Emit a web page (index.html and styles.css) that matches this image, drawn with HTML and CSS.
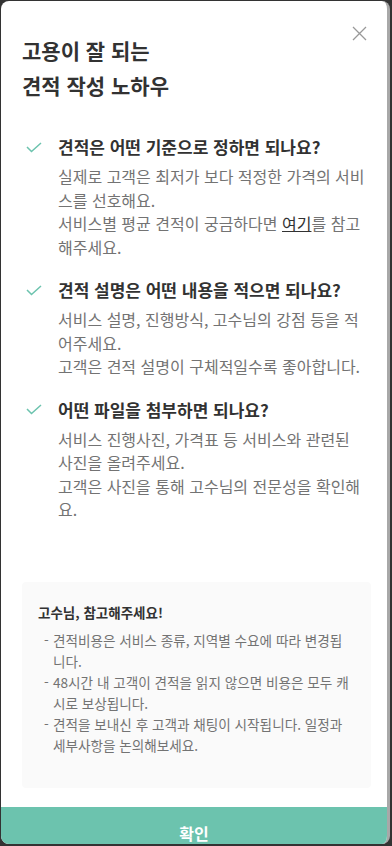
FILE: index.html
```html
<!DOCTYPE html>
<html lang="ko">
<head>
  <meta charset="UTF-8">
  <meta name="viewport" content="width=device-width, initial-scale=1.0">
  <title>견적 작성 노하우</title>
  <link rel="stylesheet" href="styles.css">
</head>
<body>
  <div class="modal">
    <div class="modal-body">
      <button class="close" aria-label="닫기">
        <svg width="15" height="15" viewBox="0 0 15 15"><path d="M1 1L14 14M14 1L1 14" stroke="#999" stroke-width="1.3" fill="none"/></svg>
      </button>
      <h1 class="title">고용이 잘 되는<br>견적 작성 노하우</h1>

      <ul class="tips">
        <li class="tip">
          <div class="question">
            <svg class="check" width="16" height="11" viewBox="0 0 16 11"><path d="M1 5L5.5 9.5L15 1" stroke="#6cc3ae" stroke-width="1.5" fill="none"/></svg>
            견적은 어떤 기준으로 정하면 되나요?
          </div>
          <p class="answer">실제로 고객은 최저가 보다 적정한 가격의 서비스를 선호해요.<br>서비스별 평균 견적이 궁금하다면 <a href="#">여기</a>를 참고해주세요.</p>
        </li>
        <li class="tip">
          <div class="question">
            <svg class="check" width="16" height="11" viewBox="0 0 16 11"><path d="M1 5L5.5 9.5L15 1" stroke="#6cc3ae" stroke-width="1.5" fill="none"/></svg>
            견적 설명은 어떤 내용을 적으면 되나요?
          </div>
          <p class="answer">서비스 설명, 진행방식, 고수님의 강점 등을 적어주세요.<br>고객은 견적 설명이 구체적일수록 좋아합니다.</p>
        </li>
        <li class="tip">
          <div class="question">
            <svg class="check" width="16" height="11" viewBox="0 0 16 11"><path d="M1 5L5.5 9.5L15 1" stroke="#6cc3ae" stroke-width="1.5" fill="none"/></svg>
            어떤 파일을 첨부하면 되나요?
          </div>
          <p class="answer">서비스 진행사진, 가격표 등 서비스와 관련된 사진을 올려주세요.<br>고객은 사진을 통해 고수님의 전문성을 확인해요.</p>
        </li>
      </ul>

      <div class="notice">
        <h2 class="notice-title">고수님, 참고해주세요!</h2>
        <ul class="notice-list">
          <li>견적비용은 서비스 종류, 지역별 수요에 따라 변경됩니다.</li>
          <li>48시간 내 고객이 견적을 읽지 않으면 비용은 모두 캐시로 보상됩니다.</li>
          <li>견적을 보내신 후 고객과 채팅이 시작됩니다. 일정과 세부사항을 논의해보세요.</li>
        </ul>
      </div>
    </div>
    <button class="confirm">확인</button>
  </div>
</body>
</html>
```

FILE: styles.css
```css
body {
  margin: 0;
  background-color: #333;
  font-family: "Noto Sans CJK KR", "Noto Sans", sans-serif;
}
.modal {
  margin: 1px 0 0 1px;
  width: 386px;
  height: 843px;
  background-color: white;
  border-right: 3px solid #a8a8a8;
  border-radius: 8px;
  overflow: hidden;
  display: flex;
  flex-direction: column;
}
.modal-body {
  flex: 1;
  position: relative;
  padding: 32px 16px 0 21px;
}
.close {
  position: absolute;
  top: 25px;
  right: 20px;
  padding: 0;
  border: none;
  background: none;
  line-height: 0;
}
.title {
  margin: 0;
  font-size: 21px;
  line-height: 35px;
  font-weight: 700;
  color: #323232;
}
.tips {
  list-style: none;
  margin: 31px 0 0;
  padding: 0;
}
.tip + .tip {
  margin-top: 18px;
}
.question {
  display: flex;
  align-items: center;
  font-size: 17px;
  line-height: 26px;
  font-weight: 700;
  color: #323232;
  margin-bottom: 5px;
}
.check {
  margin: 0 16px 0 4px;
  flex-shrink: 0;
}
.answer {
  margin: 0 4px 0 36px;
  font-size: 16px;
  line-height: 23.5px;
  color: #737373;
  word-break: break-all;
}
.answer a {
  color: #323232;
  text-decoration: underline;
}
.notice {
  margin-top: 60px;
  background-color: #fafafa;
  border-radius: 4px;
  padding: 20px 19px 32px 16px;
}
.notice-title {
  margin: 0 0 8px;
  font-size: 13.5px;
  line-height: 20px;
  font-weight: 700;
  color: #323232;
}
.notice-list {
  list-style: none;
  margin: 0;
  padding: 0 0 0 6px;
}
.notice-list li {
  position: relative;
  padding-left: 9px;
  font-size: 13.6px;
  line-height: 21px;
  color: #737373;
  word-break: break-all;
}
.notice-list li::before {
  content: "-";
  position: absolute;
  left: 0;
}
.confirm {
  height: 37px;
  flex-shrink: 0;
  border: none;
  padding: 14px 0 0;
  background-color: #6cc3ae;
  color: white;
  font-family: inherit;
  font-size: 16px;
  line-height: 22px;
  font-weight: 700;
  text-align: center;
  overflow: hidden;
}
```
